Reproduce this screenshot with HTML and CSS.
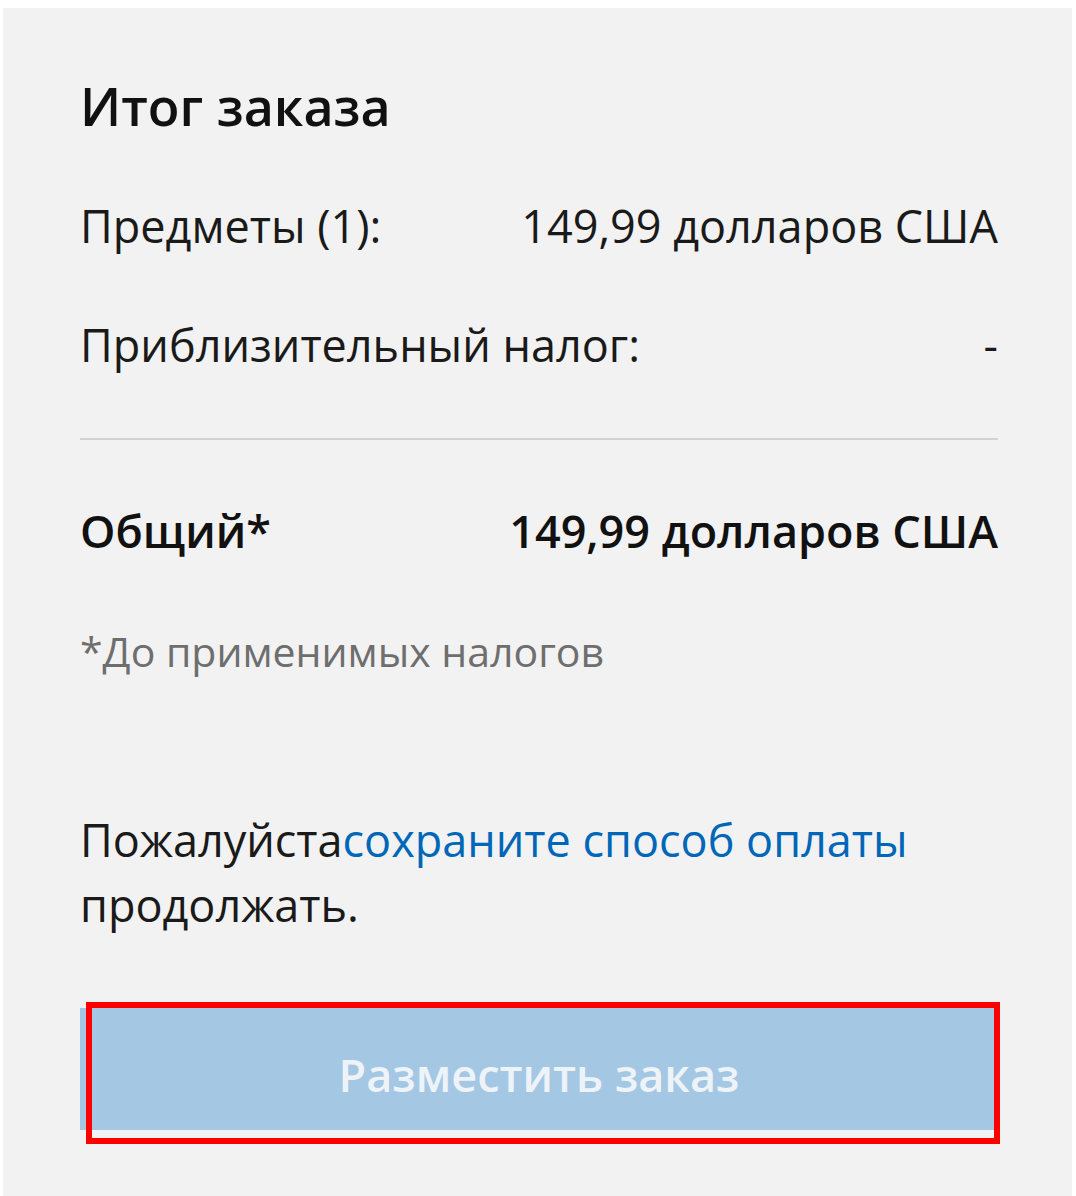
FILE: index.html
```html
<!DOCTYPE html>
<html lang="ru">
<head>
<meta charset="utf-8">
<title>Итог заказа</title>
<link rel="stylesheet" href="styles.css">
</head>
<body>
<section class="panel">
  <h2 class="title">Итог заказа</h2>
  <div class="row row-first">
    <span>Предметы (1):</span>
    <span>149,99 долларов США</span>
  </div>
  <div class="row">
    <span>Приблизительный налог:</span>
    <span>-</span>
  </div>
  <hr class="divider">
  <div class="row row-total">
    <span>Общий*</span>
    <span>149,99 долларов США</span>
  </div>
  <p class="note">*До применимых налогов</p>
  <p class="notice">Пожалуйста<a href="#" class="link">сохраните способ оплаты</a> продолжать.</p>
  <div class="btn-wrap">
    <button class="btn" disabled>Разместить заказ</button>
    <span class="highlight"></span>
  </div>
</section>
</body>
</html>
```

FILE: styles.css
```css
html, body {
  margin: 0;
  padding: 0;
  background: #ffffff;
}

body {
  font-family: "Open Sans", "Noto Sans", "Liberation Sans", sans-serif;
  color: #1a1a1a;
}

.panel {
  margin: 8px 4px 0 3px;
  background: #f2f2f2;
  padding: 66px 74px 40px 77px;
  min-height: 1188px;
  box-sizing: border-box;
}

.title {
  margin: 0;
  font-size: 52px;
  line-height: 64px;
  font-weight: 600;
  color: #111;
}

.row {
  display: flex;
  justify-content: space-between;
  font-size: 45px;
  line-height: 60px;
  margin-top: 59px;
}

.row-first {
  margin-top: 58px;
}

.divider {
  border: 0;
  height: 2px;
  background: #d2d2d2;
  margin: 63px 0 0 0;
}

.row-total {
  margin-top: 61px;
  font-weight: 600;
  color: #111;
}

.note {
  margin: 60px 0 0 0;
  font-size: 41px;
  line-height: 60px;
  color: #6e6e6e;
}

.notice {
  margin: 126px 0 0 0;
  font-size: 45px;
  line-height: 65px;
  width: 880px;
}

.link {
  color: #0067b8;
  text-decoration: none;
}

.btn-wrap {
  position: relative;
  margin-top: 71px;
}

.btn {
  display: block;
  width: 100%;
  height: 122px;
  border: 0;
  background: #a4c7e4;
  color: #eef3f8;
  font-family: inherit;
  font-size: 45px;
  font-weight: 600;
  padding: 10px 0 0 0;
}

.highlight {
  position: absolute;
  top: -6px;
  left: 6px;
  right: -2px;
  bottom: -14px;
  border: 6px solid #ff0000;
  pointer-events: none;
}
```
